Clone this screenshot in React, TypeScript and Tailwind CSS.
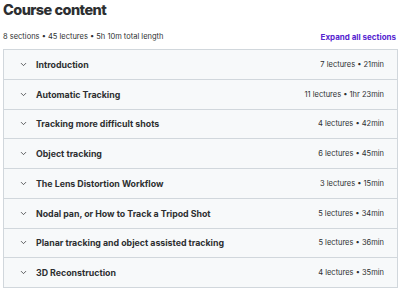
import { ChevronDown } from "lucide-react";

const sections = [
  { title: "Introduction", meta: "7 lectures • 21min" },
  { title: "Automatic Tracking", meta: "11 lectures • 1hr 23min" },
  { title: "Tracking more difficult shots", meta: "4 lectures • 42min" },
  { title: "Object tracking", meta: "6 lectures • 45min" },
  { title: "The Lens Distortion Workflow", meta: "3 lectures • 15min" },
  { title: "Nodal pan, or How to Track a Tripod Shot", meta: "5 lectures • 34min" },
  { title: "Planar tracking and object assisted tracking", meta: "5 lectures • 36min" },
  { title: "3D Reconstruction", meta: "4 lectures • 35min" },
];

export default function App() {
  return (
    <div className="w-[400px] h-[290px] bg-white overflow-hidden px-[3px] text-[#2d2f31] font-['Inter',sans-serif]">
      <h2 className="text-[14.5px] font-extrabold leading-none pt-[3px] tracking-[-0.55px]">Course content</h2>
      <div className="flex items-center justify-between mt-[12.5px] h-[14px] pr-[1px]">
        <span className="text-[7.5px] text-[#2d2f31]">8 sections • 45 lectures • 5h 10m total length</span>
        <button className="text-[8px] font-bold text-[#5624d0]">Expand all sections</button>
      </div>
      <div className="mt-[5px] border border-[#d1d7dc] w-[395px]">
        {sections.map((s, i) => (
          <div
            key={s.title}
            className={`flex items-center bg-[#f7f9fa] pl-[15px] pr-[13px] ${i > 0 ? "h-[29.75px] border-t border-[#d1d7dc]" : "h-[28.75px]"}`}
          >
            <ChevronDown className="w-[9px] h-[9px] text-[#2d2f31]" strokeWidth={2} />
            <span className="ml-[8px] text-[8.8px] font-bold flex-1">{s.title}</span>
            <span className="text-[7.5px] text-[#2d2f31]">{s.meta}</span>
          </div>
        ))}
      </div>
    </div>
  );
}
